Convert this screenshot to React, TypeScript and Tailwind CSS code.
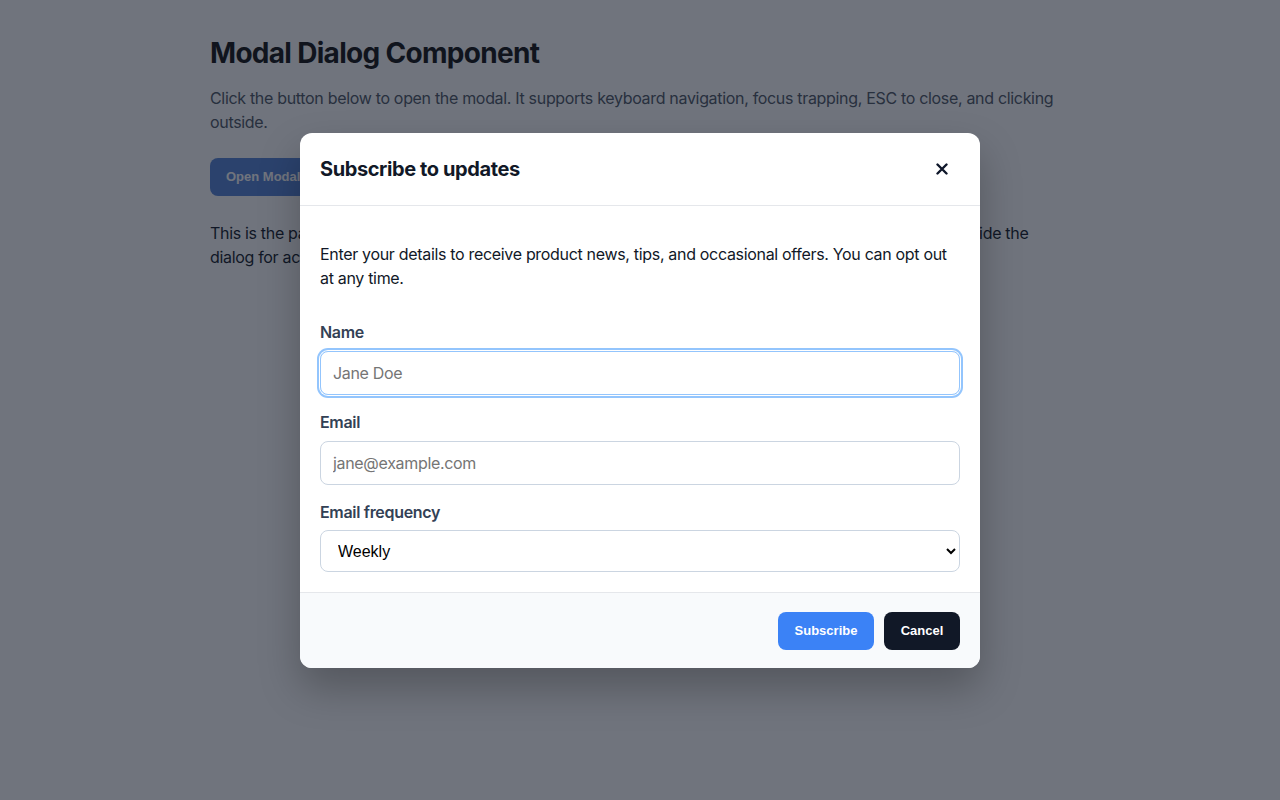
import { useState } from 'react';

function CloseIcon() {
  return (
    <svg width="12" height="12" viewBox="0 0 12 12" fill="none" stroke="currentColor" strokeWidth="2.4" strokeLinecap="round">
      <path d="M1.5 1.5l9 9M10.5 1.5l-9 9" />
    </svg>
  );
}

export default function App() {
  const [open, setOpen] = useState(true);
  const [name, setName] = useState('');
  const [email, setEmail] = useState('');
  const [frequency, setFrequency] = useState('weekly');

  return (
    <div className="relative min-h-[800px] bg-white font-['Inter',sans-serif] tracking-[-0.02em]">
      <div className="mx-auto max-w-[860px] pt-[36px]">
        <h1 className="text-[28px] leading-[34px] font-bold text-[#111111] tracking-[-0.025em]">Modal Dialog Component</h1>
        <p className="mt-[16px] text-[16px] leading-[24px] text-[#4b5563]">
          Click the button below to open the modal. It supports keyboard navigation, focus trapping, ESC to close, and clicking
          outside.
        </p>
        <button
          className="mt-[24px] h-[38px] px-[16px] rounded-[8px] bg-[#5383d8] text-white text-[13px] font-bold tracking-normal font-['Liberation_Sans',Arial,sans-serif]"
          onClick={() => setOpen(true)}
        >
          Open Modal
        </button>
        <p className="mt-[25px] text-[16px] leading-[24px] text-[#111827]">
          This is the page content behind the modal. While it is open, the rest of the page is inert; tap anywhere outside the
          dialog for accessibility testing.
        </p>
      </div>

      {open && (
        <div
          className="absolute inset-0 flex items-start justify-center bg-[rgba(17,24,39,0.6)] pt-[133px]"
          onClick={() => setOpen(false)}
        >
          <div
            role="dialog"
            aria-modal="true"
            className="w-[680px] overflow-hidden rounded-[12px] bg-white shadow-[0_20px_40px_rgba(0,0,0,0.25)]"
            onClick={(e) => e.stopPropagation()}
          >
            <div className="flex h-[73px] items-center justify-between border-b border-[#e5e7eb] px-[20px]">
              <h2 className="text-[20px] font-bold text-[#111827] tracking-[-0.02em]">Subscribe to updates</h2>
              <button
                aria-label="Close"
                className="flex h-[32px] w-[32px] items-center justify-center text-[#0f172a] mr-[2px]"
                onClick={() => setOpen(false)}
              >
                <CloseIcon />
              </button>
            </div>

            <div className="px-[20px] pt-[36px] pb-[20px]">
              <p className="text-[16px] leading-[24px] text-[#111827] mb-[30px]">
                Enter your details to receive product news, tips, and occasional offers. You can opt out at any time.
              </p>

              <label className="block text-[16px] leading-[24px] font-semibold text-[#334155]">Name</label>
              <input
                value={name}
                onChange={(e) => setName(e.target.value)}
                placeholder="Jane Doe"
                className="mt-[7px] block h-[44px] w-full rounded-[8px] border border-[#93c5fd] px-[12px] text-[16px] text-[#111827] placeholder:text-[#757575] outline-none shadow-[0_0_0_1px_#fff,0_0_0_3px_#93c5fd]"
              />

              <label className="mt-[15px] block text-[16px] leading-[24px] font-semibold text-[#334155]">Email</label>
              <input
                value={email}
                onChange={(e) => setEmail(e.target.value)}
                placeholder="jane@example.com"
                className="mt-[7px] block h-[44px] w-full rounded-[8px] border border-[#cbd5e1] px-[12px] text-[16px] text-[#111827] placeholder:text-[#757575] outline-none"
              />

              <label className="mt-[15px] block text-[16px] leading-[24px] font-semibold text-[#334155]">Email frequency</label>
              <select
                value={frequency}
                onChange={(e) => setFrequency(e.target.value)}
                className="mt-[6px] block h-[42px] w-full rounded-[8px] border border-[#cbd5e1] bg-white px-[13px] text-[16px] text-black tracking-normal font-['Liberation_Sans',Arial,sans-serif] outline-none"
              >
                <option value="daily">Daily</option>
                <option value="weekly">Weekly</option>
                <option value="monthly">Monthly</option>
              </select>
            </div>

            <div className="flex h-[76px] items-center justify-end gap-[10px] border-t border-[#e5e7eb] bg-[#f8fafc] px-[20px]">
              <button className="h-[38px] w-[96px] rounded-[8px] bg-[#3b82f6] text-[13px] font-bold text-white tracking-normal font-['Liberation_Sans',Arial,sans-serif]">
                Subscribe
              </button>
              <button
                className="h-[38px] w-[76px] rounded-[8px] bg-[#111827] text-[13px] font-bold text-white tracking-normal font-['Liberation_Sans',Arial,sans-serif]"
                onClick={() => setOpen(false)}
              >
                Cancel
              </button>
            </div>
          </div>
        </div>
      )}
    </div>
  );
}
